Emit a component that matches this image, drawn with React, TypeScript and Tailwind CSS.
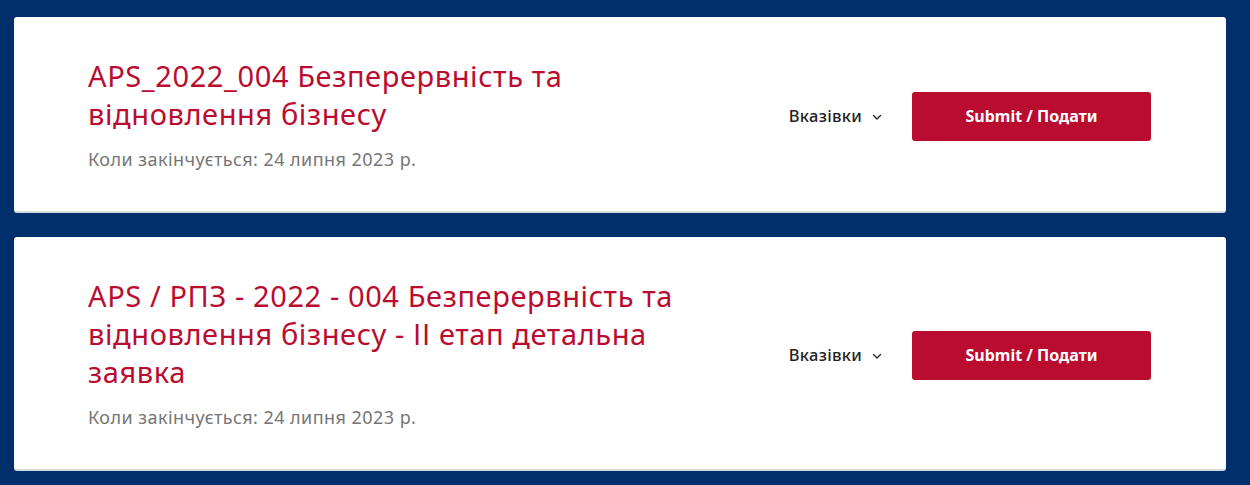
import React from "react";

type Opportunity = {
  title: string;
  closes: string;
};

const items: Opportunity[] = [
  {
    title: "APS_2022_004 Безперервність та відновлення бізнесу",
    closes: "Коли закінчується: 24 липня 2023 р.",
  },
  {
    title:
      "APS / РПЗ - 2022 - 004 Безперервність та відновлення бізнесу - ІІ етап детальна заявка",
    closes: "Коли закінчується: 24 липня 2023 р.",
  },
];

function Chevron() {
  return (
    <svg width="10" height="10" viewBox="0 0 10 10" fill="none" className="ml-[10px] mt-[1px]">
      <path d="M1.5 3.5 L5 7 L8.5 3.5" stroke="#222" strokeWidth="1.3" strokeLinecap="round" strokeLinejoin="round" />
    </svg>
  );
}

function Card({ item }: { item: Opportunity }) {
  return (
    <div className="flex items-center rounded-[3px] bg-white pl-[74px] pr-[75px] py-[40px] shadow-[0_2px_0_#d6d9de]">
      <div className="flex-1 min-w-0">
        <h2 className="max-w-[625px] text-[29px] leading-[38px] tracking-[0.6px] text-[#ba0c2f] font-normal">
          {item.title}
        </h2>
        <p className="mt-[14px] text-[18px] leading-[24px] tracking-[0.45px] text-[#767676]">{item.closes}</p>
      </div>
      <div className="flex items-center mt-[4px]">
        <button className="flex items-center text-[16.5px] tracking-[0.3px] text-[#222] font-medium">
          Вказівки
          <Chevron />
        </button>
        <button className="ml-[30px] h-[49px] w-[239px] rounded-[3px] bg-[#ba0c2f] text-[16px] font-bold text-white">
          Submit / Подати
        </button>
      </div>
    </div>
  );
}

export default function App() {
  return (
    <div
      className="min-h-[485px] bg-[#002f6c] pl-[14px] pr-[24px] pt-[17px] pb-[17px] flex flex-col gap-[26px]"
      style={{ fontFamily: '"Noto Sans", "Open Sans", sans-serif' }}
    >
      {items.map((it, i) => (
        <Card key={i} item={it} />
      ))}
    </div>
  );
}
